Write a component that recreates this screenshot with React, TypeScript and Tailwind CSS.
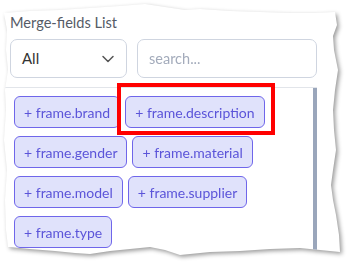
import { ChevronDown } from 'lucide-react';

const fields = [
  'frame.brand',
  'frame.description',
  'frame.gender',
  'frame.material',
  'frame.model',
  'frame.supplier',
  'frame.type',
];

// torn paper outline of the cropped screenshot
const tornEdge =
  '[clip-path:polygon(4px_13px,30px_11px,60px_10px,90px_8px,120px_6px,145px_4px,165px_7px,185px_10px,200px_9px,230px_11px,260px_12px,290px_13px,315px_13px,335px_12px,337px_25px,333px_36px,334px_50px,338px_70px,335px_90px,333px_110px,334px_130px,336px_150px,333px_170px,331px_185px,333px_200px,336px_215px,339px_235px,340px_252px,320px_250px,300px_248px,270px_249px,240px_251px,210px_252px,180px_255px,165px_250px,150px_247px,130px_249px,110px_251px,90px_254px,75px_253px,55px_251px,30px_249px,10px_247px,8px_247px,6px_230px,5px_200px,7px_170px,4px_140px,6px_110px,5px_90px,8px_70px,6px_50px,7px_30px)]';

export default function App() {
  return (
    <div className="relative w-[350px] h-[265px] bg-white overflow-hidden font-['Lato','Noto_Sans',sans-serif]">
      <div className="w-full h-full drop-shadow-[2px_2px_2px_rgba(0,0,0,0.4)]">
        <div className={`w-full h-full bg-white flex flex-col ${tornEdge}`}>
          <div className="px-[10px] pt-[14px] text-[14.6px] leading-[18px] text-[#555b66]">
            Merge-fields List
          </div>

          <div className="flex gap-[10px] px-[10px] mt-[7px]">
            <div className="w-[117px] h-[39px] border border-[#cfd5e0] rounded-[7px] flex items-center justify-between pl-[11px] pr-[8px] text-[15px] text-[#333]">
              <span>All</span>
              <ChevronDown size={20} strokeWidth={1.8} className="text-[#555]" />
            </div>
            <div className="w-[180px] h-[39px] border border-[#cfd5e0] rounded-[7px] flex items-center pl-[11px] text-[14.5px] text-[#a3abbb]">
              search...
            </div>
          </div>

          <div className="mt-[9px] w-[317px] flex-1 border-t border-[#e2e5ea] flex">
            <div className="flex-1 flex flex-wrap content-start gap-x-[5px] gap-y-[8px] pl-[14px] pt-[8px]">
              {fields.map(f => (
                <span
                  key={f}
                  className="h-[32px] flex items-center px-[9px] rounded-[6px] border border-[#6f66ea] bg-[#e0e2fb] text-[#5b54d9] text-[14px]"
                >
                  + {f}
                </span>
              ))}
            </div>
            <div className="w-[4px] bg-[#9aa6bb]" />
          </div>
        </div>
      </div>

      {/* annotation */}
      <div className="absolute left-[117px] top-[83px] w-[158px] h-[52px] border-[4px] border-[#ff0000]" />
    </div>
  );
}
